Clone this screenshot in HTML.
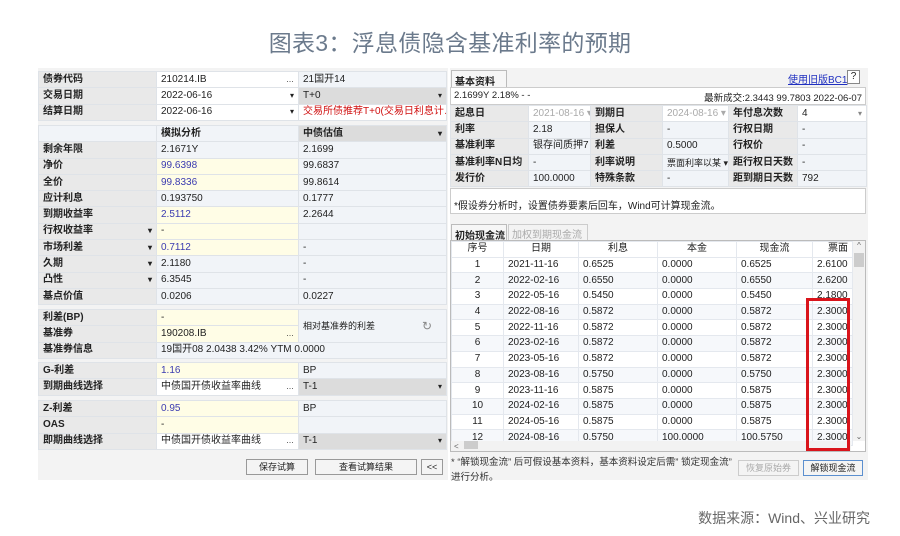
<!DOCTYPE html>
<html><head><meta charset="utf-8"><style>
*{margin:0;padding:0;box-sizing:border-box}
body{width:900px;height:536px;background:#fff;font-family:"Liberation Sans","Noto Sans CJK SC",sans-serif;position:relative;overflow:hidden;color:#222}
.a{position:absolute}
table{border-collapse:collapse;position:absolute;table-layout:fixed;font-size:10px}
td{border:1px solid #dfe3e8;height:16.3px;padding:0 4px;white-space:nowrap;overflow:hidden;line-height:14px}
td.l{background:#e9e9e9;font-weight:bold;color:#222}
td.y{background:#fffde6}
td.w{background:#fff}
td.b{background:#f1f4f8}
td.g{background:#dcdcdc}
.blue{color:#3b3bb0}
.red{color:#d01010}
.dd{float:right;font-size:8px}
.btn{position:absolute;border:1px solid #999;background:#f4f4f4;font-size:9px;text-align:center;line-height:14px;height:16px}
.rt td{height:16.3px}
.ct td{height:15.7px;background:#fff;border-color:#e4e8ee}
.ct tr:nth-child(odd) td{background:#f6f8fb}
</style></head><body>
<div class="a" style="left:0;top:24px;width:900px;text-align:center;font-size:23px;color:#6b7a8c;letter-spacing:0.3px">图表3：浮息债隐含基准利率的预期</div>

<div class="a" style="left:38px;top:68px;width:410px;height:412px;background:#f3f3f3"></div>
<table style="left:38px;top:71px;width:408px">
<colgroup><col style="width:118px"><col style="width:142px"><col style="width:148px"></colgroup>
<tr><td class="l">债券代码</td><td class="w">210214.IB<span class="dd">…</span></td><td class="b">21国开14</td></tr>
<tr><td class="l">交易日期</td><td class="w">2022-06-16<span class="dd">▾</span></td><td class="g">T+0<span class="dd">▾</span></td></tr>
<tr><td class="l">结算日期</td><td class="w">2022-06-16<span class="dd">▾</span></td><td class="w red">交易所债推荐T+0(交易日利息计…</td></tr>
</table>
<table style="left:38px;top:125px;width:408px">
<colgroup><col style="width:118px"><col style="width:142px"><col style="width:148px"></colgroup>
<tr><td class="b"></td><td class="b" style="font-weight:bold">模拟分析</td><td class="g" style="font-weight:bold">中债估值<span class="dd">▾</span></td></tr>
<tr><td class="l">剩余年限</td><td class="b">2.1671Y</td><td class="b">2.1699</td></tr>
<tr><td class="l">净价</td><td class="y blue">99.6398</td><td class="b">99.6837</td></tr>
<tr><td class="l">全价</td><td class="y blue">99.8336</td><td class="b">99.8614</td></tr>
<tr><td class="l">应计利息</td><td class="b">0.193750</td><td class="b">0.1777</td></tr>
<tr><td class="l">到期收益率</td><td class="y blue">2.5112</td><td class="b">2.2644</td></tr>
<tr><td class="l">行权收益率<span class="dd">▾</span></td><td class="y">-</td><td class="b"></td></tr>
<tr><td class="l">市场利差<span class="dd">▾</span></td><td class="y blue">0.7112</td><td class="b">-</td></tr>
<tr><td class="l">久期<span class="dd">▾</span></td><td class="b">2.1180</td><td class="b">-</td></tr>
<tr><td class="l">凸性<span class="dd">▾</span></td><td class="b">6.3545</td><td class="b">-</td></tr>
<tr><td class="l">基点价值</td><td class="b">0.0206</td><td class="b">0.0227</td></tr>
</table>
<table style="left:38px;top:309px;width:408px">
<colgroup><col style="width:118px"><col style="width:142px"><col style="width:148px"></colgroup>
<tr><td class="l">利差(BP)</td><td class="y">-</td><td class="b" rowspan="2" style="font-size:9px">相对基准券的利差<span class="dd" style="font-size:12px;color:#888;margin-right:10px">↻</span></td></tr>
<tr><td class="l">基准券</td><td class="y">190208.IB<span class="dd">…</span></td></tr>
<tr><td class="l">基准券信息</td><td class="b" colspan="2">19国开08 2.0438 3.42% YTM 0.0000</td></tr>
</table>
<table style="left:38px;top:362px;width:408px">
<colgroup><col style="width:118px"><col style="width:142px"><col style="width:148px"></colgroup>
<tr><td class="l">G-利差</td><td class="y blue">1.16</td><td class="b">BP</td></tr>
<tr><td class="l">到期曲线选择</td><td class="w">中债国开债收益率曲线<span class="dd">…</span></td><td class="g">T-1<span class="dd">▾</span></td></tr>
</table>
<table style="left:38px;top:400px;width:408px">
<colgroup><col style="width:118px"><col style="width:142px"><col style="width:148px"></colgroup>
<tr><td class="l">Z-利差</td><td class="y blue">0.95</td><td class="b">BP</td></tr>
<tr><td class="l">OAS</td><td class="y">-</td><td class="b"></td></tr>
<tr><td class="l">即期曲线选择</td><td class="w">中债国开债收益率曲线<span class="dd">…</span></td><td class="g">T-1<span class="dd">▾</span></td></tr>
</table>
<div class="btn" style="left:246px;top:459px;width:62px">保存试算</div>
<div class="btn" style="left:315px;top:459px;width:102px">查看试算结果</div>
<div class="btn" style="left:421px;top:459px;width:22px">&lt;&lt;</div>

<div class="a" style="left:450px;top:68px;width:418px;height:412px;background:#f3f3f3"></div>
<div class="a" style="left:451px;top:70px;width:56px;height:17px;background:#f6f6f6;border:1px solid #bbb;border-bottom:none;font-size:10px;font-weight:bold;padding:2px 3px;white-space:nowrap">基本资料</div>
<div class="a" style="left:788px;top:71px;font-size:10px;color:#2030c0;text-decoration:underline">使用旧版BC1</div>
<div class="a" style="left:847px;top:70px;width:13px;height:14px;border:1px solid #888;font-size:10px;text-align:center;background:#fff">?</div>
<div class="a" style="left:450px;top:87px;width:416px;height:18px;background:#fff;border:1px solid #ccc;font-size:9.5px;padding:2px 3px;white-space:nowrap;display:flex;justify-content:space-between"><span>2.1699Y 2.18% - -</span><span>最新成交:2.3443 99.7803 2022-06-07</span></div>
<table class="rt" style="left:450px;top:105px;width:416px">
<colgroup><col style="width:78px"><col style="width:62px"><col style="width:72px"><col style="width:66px"><col style="width:69px"><col style="width:69px"></colgroup>
<tr><td class="l">起息日</td><td class="w" style="color:#aaa">2021-08-16 ▾</td><td class="l">到期日</td><td class="w" style="color:#aaa">2024-08-16 ▾</td><td class="l">年付息次数</td><td class="w">4<span class="dd" style="color:#888">▾</span></td></tr>
<tr><td class="l">利率</td><td class="b">2.18</td><td class="l">担保人</td><td class="b">-</td><td class="l">行权日期</td><td class="b">-</td></tr>
<tr><td class="l">基准利率</td><td class="b">银存间质押7日</td><td class="l">利差</td><td class="b">0.5000</td><td class="l">行权价</td><td class="b">-</td></tr>
<tr><td class="l">基准利率N日均</td><td class="b">-</td><td class="l">利率说明</td><td class="b" style="font-size:9px">票面利率以某 ▾</td><td class="l">距行权日天数</td><td class="b">-</td></tr>
<tr><td class="l">发行价</td><td class="b">100.0000</td><td class="l">特殊条款</td><td class="b">-</td><td class="l">距到期日天数</td><td class="b">792</td></tr>
</table>
<div class="a" style="left:450px;top:188px;width:416px;height:26px;background:#fff;border:1px solid #ccc;font-size:10px;padding:8px 3px 0">*假设券分析时，设置债券要素后回车，Wind可计算现金流。</div>
<div class="a" style="left:451px;top:224px;width:56px;height:17px;background:#f6f6f6;border:1px solid #bbb;border-bottom:none;font-size:10px;font-weight:bold;padding:2px 3px;white-space:nowrap">初始现金流</div>
<div class="a" style="left:508px;top:224px;width:80px;height:16px;border:1px solid #ccc;border-bottom:none;font-size:10px;color:#aaa;padding:1px 3px;white-space:nowrap">加权到期现金流</div>
<div class="a" style="left:450px;top:240px;width:416px;height:212px;background:#fff;border:1px solid #bbb"></div>
<table class="ct" style="left:451px;top:241px;width:401px">
<colgroup><col style="width:52px"><col style="width:75px"><col style="width:79px"><col style="width:79px"><col style="width:76px"><col style="width:40px"></colgroup>
<tr><td style="text-align:center;background:#fff">序号</td><td style="text-align:center;background:#fff">日期</td><td style="text-align:center;background:#fff">利息</td><td style="text-align:center;background:#fff">本金</td><td style="text-align:center;background:#fff">现金流</td><td style="text-align:right;background:#fff">票面</td></tr>
<tr><td style="text-align:center">1</td><td>2021-11-16</td><td>0.6525</td><td>0.0000</td><td>0.6525</td><td>2.6100</td></tr>
<tr><td style="text-align:center">2</td><td>2022-02-16</td><td>0.6550</td><td>0.0000</td><td>0.6550</td><td>2.6200</td></tr>
<tr><td style="text-align:center">3</td><td>2022-05-16</td><td>0.5450</td><td>0.0000</td><td>0.5450</td><td>2.1800</td></tr>
<tr><td style="text-align:center">4</td><td>2022-08-16</td><td>0.5872</td><td>0.0000</td><td>0.5872</td><td>2.3000</td></tr>
<tr><td style="text-align:center">5</td><td>2022-11-16</td><td>0.5872</td><td>0.0000</td><td>0.5872</td><td>2.3000</td></tr>
<tr><td style="text-align:center">6</td><td>2023-02-16</td><td>0.5872</td><td>0.0000</td><td>0.5872</td><td>2.3000</td></tr>
<tr><td style="text-align:center">7</td><td>2023-05-16</td><td>0.5872</td><td>0.0000</td><td>0.5872</td><td>2.3000</td></tr>
<tr><td style="text-align:center">8</td><td>2023-08-16</td><td>0.5750</td><td>0.0000</td><td>0.5750</td><td>2.3000</td></tr>
<tr><td style="text-align:center">9</td><td>2023-11-16</td><td>0.5875</td><td>0.0000</td><td>0.5875</td><td>2.3000</td></tr>
<tr><td style="text-align:center">10</td><td>2024-02-16</td><td>0.5875</td><td>0.0000</td><td>0.5875</td><td>2.3000</td></tr>
<tr><td style="text-align:center">11</td><td>2024-05-16</td><td>0.5875</td><td>0.0000</td><td>0.5875</td><td>2.3000</td></tr>
<tr><td style="text-align:center">12</td><td>2024-08-16</td><td>0.5750</td><td>100.0000</td><td>100.5750</td><td>2.3000</td></tr>
</table>
<div class="a" style="left:853px;top:241px;width:12px;height:200px;background:#f2f2f2;font-size:8px;text-align:center;color:#666">^<div style="height:14px;background:#ccc;margin:3px 1px 0"></div><div style="position:absolute;bottom:0;width:12px">⌄</div></div>
<div class="a" style="left:451px;top:441px;width:400px;height:10px;background:#f2f2f2;font-size:8px;color:#666;padding-left:3px">&lt;<span style="display:inline-block;width:14px;height:8px;background:#ccc;margin-left:5px"></span></div>
<div class="a" style="left:806px;top:298px;width:44px;height:153px;border:3px solid #d9141b"></div>
<div class="a" style="left:451px;top:455px;font-size:9.5px;line-height:15px;color:#333">* “解锁现金流” 后可假设基本资料，基本资料设定后需” 锁定现金流”<br>进行分析。</div>
<div class="btn" style="left:738px;top:460px;width:61px;color:#aaa;border-color:#ccc">恢复原始券</div>
<div class="btn" style="left:803px;top:460px;width:60px;border-color:#5b8fcf">解锁现金流</div>

<div class="a" style="right:30px;top:508px;font-size:14px;color:#666">数据来源：Wind、兴业研究</div>
</body></html>
